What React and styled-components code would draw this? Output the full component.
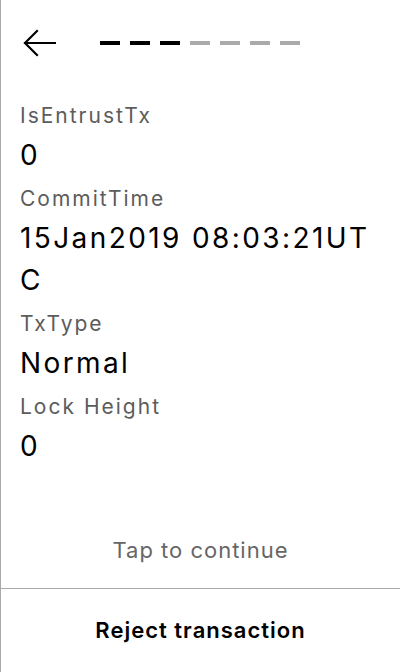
import React from "react";
import styled, { createGlobalStyle } from "styled-components";

const GlobalStyle = createGlobalStyle`
  * {
    box-sizing: border-box;
  }
  html, body {
    margin: 0;
    padding: 0;
    background: #fff;
    font-family: Inter, "Noto Sans", sans-serif;
  }
`;

const Screen = styled.div`
  display: flex;
  flex-direction: column;
  min-height: 100vh;
  border-left: 1px solid #aaa;
  background: #fff;
`;

const Header = styled.div`
  display: flex;
  align-items: center;
  padding: 28px 19px 0;
  margin-bottom: 35px;
`;

const BackButton = styled.button`
  display: flex;
  padding: 0;
  border: 0;
  background: none;
  cursor: pointer;
`;

const Steps = styled.div`
  display: flex;
  gap: 10px;
  margin-left: 44px;
`;

const Step = styled.span`
  width: 20px;
  height: 4px;
  background: ${(p) => (p.$done ? "#000" : "#aaa")};
`;

const Fields = styled.div`
  flex: 1;
  padding: 0 19px;
`;

const Label = styled.div`
  font-size: 21px;
  line-height: 24px;
  letter-spacing: 2px;
  padding: 11px 0 6px;
  color: #5c5c5c;
`;

const Value = styled.div`
  font-size: 28px;
  line-height: 42px;
  letter-spacing: 2.4px;
  color: #000;
  word-break: break-all;
`;

const Hint = styled.div`
  text-align: center;
  font-size: 22px;
  line-height: 24px;
  letter-spacing: 1px;
  color: #666;
  padding-bottom: 26px;
`;

const RejectButton = styled.button`
  display: block;
  width: 100%;
  border: 0;
  border-top: 1px solid #aaa;
  background: none;
  padding: 29px 0 30px;
  font-family: inherit;
  font-size: 22px;
  line-height: 24px;
  letter-spacing: 1px;
  font-weight: 600;
  color: #000;
  cursor: pointer;
`;

const fields = [
  { label: "IsEntrustTx", value: "0" },
  { label: "CommitTime", value: "15Jan2019 08:03:21UTC" },
  { label: "TxType", value: "Normal" },
  { label: "Lock Height", value: "0" },
];

const BackArrow = () => (
  <svg width="36" height="30" viewBox="0 0 36 30" fill="none">
    <path
      d="M17 3 L5 15 L17 27 M5 15 H35"
      stroke="#000"
      strokeWidth="2.2"
      strokeLinecap="square"
    />
  </svg>
);

const App = () => {
  return (
    <Screen>
      <GlobalStyle />
      <Header>
        <BackButton>
          <BackArrow />
        </BackButton>
        <Steps>
          {[0, 1, 2, 3, 4, 5, 6].map((i) => (
            <Step key={i} $done={i < 3} />
          ))}
        </Steps>
      </Header>
      <Fields>
        {fields.map((f) => (
          <div key={f.label}>
            <Label>{f.label}</Label>
            <Value>{f.value}</Value>
          </div>
        ))}
      </Fields>
      <Hint>Tap to continue</Hint>
      <RejectButton>Reject transaction</RejectButton>
    </Screen>
  );
};

export default App;
